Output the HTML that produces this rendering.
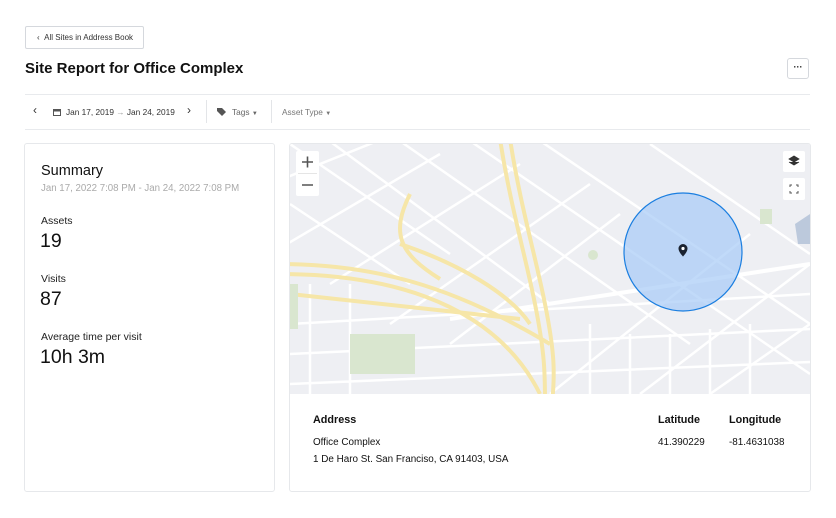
<!DOCTYPE html>
<html><head><meta charset="utf-8"><style>
*{box-sizing:border-box;margin:0;padding:0}
body{width:836px;height:518px;background:#fff;font-family:"Liberation Sans",sans-serif;color:#111;position:relative;overflow:hidden}
.abs{position:absolute}
.back{left:25px;top:26px;width:119px;height:23px;border:1px solid #d5d8dd;border-radius:2px;font-size:8px;color:#333;padding:6px 0 0 11px}
h1{position:absolute;left:25px;top:60px;font-size:15px;font-weight:bold}
.more{left:787px;top:58px;width:22px;height:21px;border:1px solid #d5d8dd;border-radius:3px;text-align:center;font-size:9px;line-height:16px;font-weight:bold}
.line{left:25px;width:785px;height:1px;background:#e8eaed}
.bar{top:107px;font-size:8.3px;color:#333}
.card{border:1px solid #e6e8eb;border-radius:3px;background:#fff}
.lbl{font-size:10.5px;color:#222;left:41px}
.num{font-size:19.5px;color:#111;left:40px}
</style></head><body>
<div class="abs back">&#8249;&nbsp;&nbsp;All Sites in Address Book</div>
<h1>Site Report for Office Complex</h1>
<div class="abs more">···</div>
<div class="abs line" style="top:94px"></div>
<div class="abs line" style="top:129px"></div>
<div class="abs bar" style="left:33px;font-size:12px;top:103px">&#8249;</div>
<svg class="abs" style="left:53px;top:108px" width="8" height="8"><rect x="0.5" y="1.5" width="7" height="6" fill="none" stroke="#555"/><rect x="0.5" y="1.5" width="7" height="2" fill="#555"/></svg>
<div class="abs bar" style="left:66px">Jan 17, 2019 <span style="color:#999">&#8594;</span> Jan 24, 2019</div>
<div class="abs bar" style="left:187px;font-size:12px;top:103px">&#8250;</div>
<div class="abs" style="left:206px;top:100px;width:1px;height:23px;background:#e3e5e8"></div>
<svg class="abs" style="left:217px;top:108px" width="10" height="8"><path d="M0 0H5L9 4L5 8L0 3Z" fill="#555"/></svg>
<div class="abs bar" style="left:232px;color:#666">Tags <span style="font-size:6px">&#9660;</span></div>
<div class="abs" style="left:271px;top:100px;width:1px;height:23px;background:#e3e5e8"></div>
<div class="abs bar" style="left:282px;color:#777">Asset Type <span style="font-size:6px">&#9660;</span></div>

<div class="abs card" style="left:24px;top:143px;width:251px;height:349px"></div>
<div class="abs" style="left:41px;top:163px;font-size:14.5px">Summary</div>
<div class="abs" style="left:41px;top:183px;font-size:9.7px;color:#aaa">Jan 17, 2022 7:08 PM - Jan 24, 2022 7:08 PM</div>
<div class="abs lbl" style="top:215px">Assets</div>
<div class="abs num" style="top:230px">19</div>
<div class="abs lbl" style="top:273px">Visits</div>
<div class="abs num" style="top:288px">87</div>
<div class="abs lbl" style="top:331px">Average time per visit</div>
<div class="abs num" style="top:346px">10h 3m</div>

<div class="abs card" style="left:289px;top:143px;width:522px;height:349px;overflow:hidden">
<svg width="520" height="250" style="display:block">
<rect width="520" height="250" fill="#eeeff3"/>
<g stroke="#fff" stroke-width="2.5" fill="none">
<path d="M-20 40L130 -20M-20 110L150 10M40 140L230 20M100 180L300 40M160 200L330 70M350 250L520 120M260 250L460 90M420 250L520 180"/>
<path d="M0 0L160 110M30 -10L260 160M100 -10L400 200M170 -10L520 230M240 -10L520 180M360 0L520 110M0 60L120 140"/>
<path d="M0 180L520 150M0 210L520 185M0 240L520 218M20 140L20 250M60 140L60 250M300 180L300 250M340 190L340 250M380 190L380 250M420 185L420 250M460 180L460 250"/>
<path d="M160 175L520 120" stroke-width="4"/>
</g>
<g stroke="#f6e6a8" stroke-width="4" fill="none">
<path d="M210 -5C220 60 235 110 245 160S255 230 255 260"/>
<path d="M220 -5C230 60 245 110 255 160S265 230 262 260"/>
<path d="M-10 120C80 120 160 140 260 200"/>
<path d="M-10 130C80 130 200 150 250 250"/>
<path d="M0 150L230 175M110 100C170 120 220 150 240 180M120 50C100 90 110 110 150 135"/>
</g>
<g fill="#d9e6cf"><rect x="0" y="140" width="8" height="45"/><rect x="60" y="190" width="65" height="40"/><circle cx="303" cy="111" r="5"/><rect x="470" y="65" width="12" height="15"/></g>
<path d="M505 80l15 -10v30h-12z" fill="#bcc9dc"/>
<circle cx="393" cy="108" r="59" fill="#a7cbf7" fill-opacity=".7" stroke="#1a7ee0" stroke-width="1.2"/>
<path d="M393 100a4.5 4.5 0 0 1 4.5 4.5c0 3.5-4.5 8-4.5 8s-4.5-4.5-4.5-8a4.5 4.5 0 0 1 4.5-4.5z" fill="#1a2230"/><circle cx="393" cy="104.5" r="1.6" fill="#fff"/>
<rect x="6" y="7" width="23" height="45" fill="#fff" rx="2"/>
<path d="M12 18h11M17.5 12.5v11M12 41h11" stroke="#555" stroke-width="1.6"/>
<line x1="8" y1="29.5" x2="27" y2="29.5" stroke="#e5e5e5"/>
<rect x="493" y="7" width="22" height="21" fill="#fff" rx="2"/>
<path d="M504 12l5 3l-5 3l-5 -3z M499 18l5 3l5 -3" fill="#333" stroke="#333" stroke-width=".8"/>
<rect x="493" y="34" width="22" height="22" fill="#fff" rx="2"/>
<path d="M500 43v-2h2M506 41h2v2M508 47v2h-2M502 49h-2v-2" stroke="#555" fill="none"/>
</svg>
<div class="abs" style="left:23px;top:270px;font-size:10.8px;font-weight:bold">Address</div>
<div class="abs" style="left:368px;top:270px;font-size:10.8px;font-weight:bold">Latitude</div>
<div class="abs" style="left:439px;top:270px;font-size:10.8px;font-weight:bold">Longitude</div>
<div class="abs" style="left:23px;top:293px;font-size:9.9px">Office Complex</div>
<div class="abs" style="left:23px;top:310px;font-size:9.9px">1 De Haro St. San Franciso, CA 91403, USA</div>
<div class="abs" style="left:368px;top:293px;font-size:9.9px">41.390229</div>
<div class="abs" style="left:439px;top:293px;font-size:9.9px">-81.4631038</div>
</div>
</body></html>
